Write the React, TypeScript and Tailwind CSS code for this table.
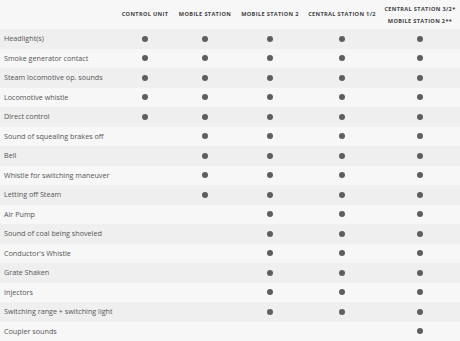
import React from "react";

const cols = ["CONTROL UNIT", "MOBILE STATION", "MOBILE STATION 2", "CENTRAL STATION 1/2"];

const rows: [string, number][] = [
  ["Headlight(s)", 0],
  ["Smoke generator contact", 0],
  ["Steam locomotive op. sounds", 0],
  ["Locomotive whistle", 0],
  ["Direct control", 0],
  ["Sound of squealing brakes off", 1],
  ["Bell", 1],
  ["Whistle for switching maneuver", 1],
  ["Letting off Steam", 1],
  ["Air Pump", 2],
  ["Sound of coal being shoveled", 2],
  ["Conductor's Whistle", 2],
  ["Grate Shaken", 2],
  ["Injectors", 2],
  ["Switching range + switching light", 2],
  ["Coupler sounds", 4],
];

const grid = "grid grid-cols-[116px_58px_62px_68px_76px_80px]";

function Dot() {
  return <span className="block w-[6px] h-[6px] rounded-full bg-[#5e5e5e]" />;
}

export default function App() {
  return (
    <div
      className="w-[460px] h-[341px] bg-[#f7f7f7] overflow-hidden text-[#555]"
      style={{ fontFamily: '"Open Sans", "Noto Sans", sans-serif' }}
    >
      <div className={`${grid} h-[29px] items-center text-[5.6px] font-bold tracking-[0.35px] text-[#3f3f3f]`}>
        <div />
        {cols.map((c) => (
          <div key={c} className="text-center whitespace-nowrap">{c}</div>
        ))}
        <div className="flex flex-col items-center leading-[12px] whitespace-nowrap">
          <span>CENTRAL STATION 3/2*</span>
          <span>MOBILE STATION 2**</span>
        </div>
      </div>
      {rows.map(([label, start], i) => (
        <div
          key={label}
          className={`${grid} h-[19.5px] items-center ${i % 2 === 0 ? "bg-[#efefef]" : "bg-[#f7f7f7]"}`}
        >
          <div className="pl-[4px] text-[7.2px] whitespace-nowrap">{label}</div>
          {[0, 1, 2, 3, 4].map((c) => (
            <div key={c} className="flex justify-center">
              {c >= start ? <Dot /> : null}
            </div>
          ))}
        </div>
      ))}
    </div>
  );
}
